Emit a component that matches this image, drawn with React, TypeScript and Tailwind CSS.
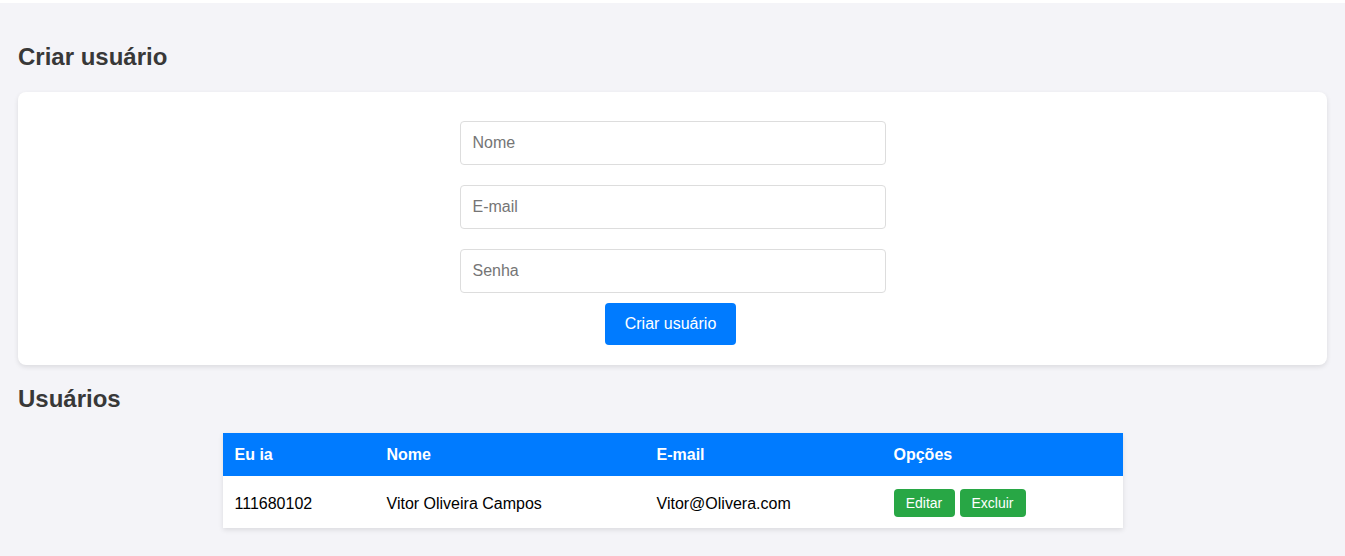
const input =
  "mb-5 block h-11 w-[426px] rounded border border-[#dddddd] bg-white px-3 text-base text-[#333] outline-none placeholder:text-[#757575]";

const usuarios = [
  { id: "111680102", nome: "Vitor Oliveira Campos", email: "Vitor@Olivera.com" },
];

export default function App() {
  return (
    <div className="min-h-[556px] border-t-[3px] border-white bg-[#f4f4f8] px-[18px] pt-10 font-['Liberation_Sans',Arial,sans-serif]">
      <h2 className="h-7 text-2xl leading-7 font-bold text-[#383838]">Criar usuário</h2>

      <form
        className="mt-[21px] flex flex-col items-center rounded-lg bg-white pt-[29px] pb-5 shadow-[0_2px_5px_rgba(0,0,0,0.1)]"
        onSubmit={(e) => e.preventDefault()}
      >
        <input className={input} placeholder="Nome" />
        <input className={input} placeholder="E-mail" />
        <input className={`${input} !mb-[10px]`} type="password" placeholder="Senha" />
        <button
          type="submit"
          className="-ml-1 h-[42px] w-[131px] rounded bg-[#007bff] text-base text-white"
        >
          Criar usuário
        </button>
      </form>

      <h2 className="mt-5 h-7 text-2xl leading-7 font-bold text-[#383838]">Usuários</h2>

      <table className="mx-auto mt-5 w-[900px] border-collapse bg-white text-left text-base shadow-[0_2px_5px_rgba(0,0,0,0.1)]">
        <colgroup>
          <col className="w-[152px]" />
          <col className="w-[270px]" />
          <col className="w-[237px]" />
          <col />
        </colgroup>
        <thead>
          <tr className="h-[43px] bg-[#007bff] text-white">
            <th className="px-3 font-bold">Eu ia</th>
            <th className="px-3 font-bold">Nome</th>
            <th className="px-3 font-bold">E-mail</th>
            <th className="px-3 font-bold">Opções</th>
          </tr>
        </thead>
        <tbody>
          {usuarios.map((u) => (
            <tr key={u.id} className="h-[52px] text-black">
              <td className="px-3 pt-[3px]">{u.id}</td>
              <td className="px-3 pt-[3px]">{u.nome}</td>
              <td className="px-3 pt-[3px]">{u.email}</td>
              <td className="px-3 pt-[2px]">
                <div className="flex gap-[5px]">
                  <button className="h-7 w-[61px] rounded bg-[#28a745] text-sm text-white">Editar</button>
                  <button className="h-7 w-[66px] rounded bg-[#28a745] text-sm text-white">Excluir</button>
                </div>
              </td>
            </tr>
          ))}
        </tbody>
      </table>
    </div>
  );
}
